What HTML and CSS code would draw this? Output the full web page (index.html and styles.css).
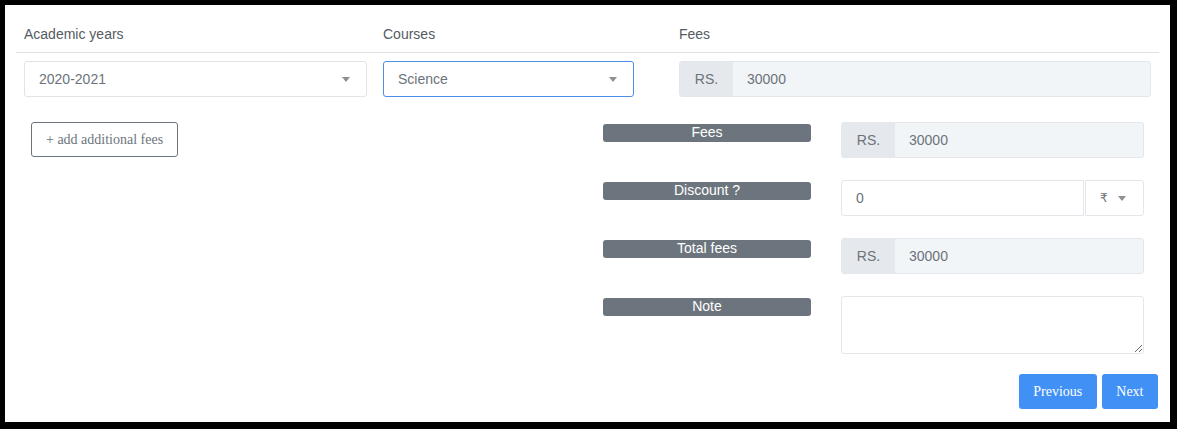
FILE: index.html
```html
<!DOCTYPE html>
<html>
<head>
<meta charset="utf-8">
<link rel="stylesheet" href="styles.css">
</head>
<body>
<div class="page">
  <div class="grid head">
    <div class="cell">Academic years</div>
    <div class="cell">Courses</div>
    <div class="cell">Fees</div>
  </div>
  <div class="grid body-row">
    <div class="cell">
      <div class="select"><span>2020-2021</span><i class="caret"></i></div>
    </div>
    <div class="cell">
      <div class="select select-focus narrow"><span>Science</span><i class="caret"></i></div>
    </div>
    <div class="cell">
      <div class="igroup"><span class="addon">RS.</span><span class="ival">30000</span></div>
    </div>
  </div>

  <div class="lower">
    <div class="left">
      <button class="btn-outline">+ add additional fees</button>
    </div>
    <div class="right">
      <div class="frow">
        <div class="badge">Fees</div>
        <div class="igroup sm"><span class="addon">RS.</span><span class="ival">30000</span></div>
      </div>
      <div class="frow">
        <div class="badge">Discount ?</div>
        <div class="disc">
          <div class="dinput">0</div>
          <div class="dselect"><span>₹</span><i class="caret"></i></div>
        </div>
      </div>
      <div class="frow">
        <div class="badge">Total fees</div>
        <div class="igroup sm"><span class="addon">RS.</span><span class="ival">30000</span></div>
      </div>
      <div class="frow">
        <div class="badge">Note</div>
        <textarea class="note"></textarea>
      </div>
    </div>
  </div>

  <div class="actions">
    <button class="btn-primary">Previous</button>
    <button class="btn-primary">Next</button>
  </div>
</div>
</body>
</html>
```

FILE: styles.css
```css
* { box-sizing: border-box; }
html, body { margin: 0; padding: 0; background: #000; }
body { font-family: "Liberation Sans", Arial, sans-serif; font-size: 14px; }

.page {
  margin: 5px;
  width: 1165px;
  height: 417px;
  background: #fff;
  padding: 10px 11px 0 11px;
}

.grid {
  display: grid;
  grid-template-columns: 359px 296px 1fr;
}
.head { border-bottom: 1px solid #dee2e6; }
.head .cell {
  padding: 9px 8px 8px;
  line-height: 20px;
  color: #555b61;
}
.body-row .cell { padding: 8px 8px 8px; }

.select {
  height: 36px;
  border: 1px solid #e0e4e8;
  border-radius: 3px;
  display: flex;
  align-items: center;
  justify-content: space-between;
  padding: 0 15px 0 14px;
  color: #6c737a;
}
.select-focus { border-color: #4a8fe7; }
.narrow { width: 251px; }

.caret {
  display: inline-block;
  width: 0; height: 0;
  border-left: 4px solid transparent;
  border-right: 4px solid transparent;
  border-top: 5px solid #8c9196;
  margin-right: 1px;
}

.igroup {
  display: flex;
  height: 36px;
  border: 1px solid #e3e7eb;
  border-radius: 3px;
  background: #f2f5f8;
  overflow: hidden;
  color: #6c737a;
}
.igroup .addon {
  width: 53px;
  background: #e5e8ec;
  display: flex;
  align-items: center;
  justify-content: center;
  font-size: 14px;
}
.igroup .ival {
  display: flex;
  align-items: center;
  padding-left: 14px;
}

.lower {
  display: flex;
  margin-top: 17px;
}
.left { width: 572px; padding: 0 15px; }
.right { flex: 1; padding: 0 15px 0 15px; display: flex; flex-direction: column; gap: 22px; }

.btn-outline {
  height: 35px;
  padding: 0 14px;
  background: #fff;
  border: 1px solid #6c757d;
  border-radius: 3px;
  color: #6c757d;
  font-family: "Liberation Serif", "Times New Roman", serif;
  font-size: 14px;
}

.frow {
  display: grid;
  grid-template-columns: 208px 1fr;
  column-gap: 30px;
  align-items: start;
}
.badge {
  margin-top: 2px;
  height: 18px;
  line-height: 17px;
  background: #6c757d;
  color: #fff;
  border-radius: 3px;
  text-align: center;
  font-size: 14px;
}

.disc { display: flex; height: 36px; }
.dinput {
  flex: 1;
  border: 1px solid #e3e7eb;
  border-radius: 3px 0 0 3px;
  display: flex;
  align-items: center;
  padding-left: 14px;
  color: #6c737a;
}
.dselect {
  width: 59px;
  margin-left: 1px;
  border: 1px solid #e3e7eb;
  border-radius: 0 3px 3px 0;
  display: flex;
  align-items: center;
  justify-content: space-between;
  padding: 0 16px 0 14px;
  color: #6c737a;
  font-family: "DejaVu Sans", sans-serif;
  font-size: 12px;
}

.note {
  height: 58px;
  width: 100%;
  border: 1px solid #e3e7eb;
  border-radius: 3px;
  resize: vertical;
  margin: 0;
  display: block;
}

.actions {
  display: flex;
  justify-content: flex-end;
  gap: 5px;
  margin-top: 20px;
  padding-right: 1px;
}
.btn-primary {
  height: 35px;
  padding: 0 14.5px;
  background: #4190f5;
  border: none;
  border-radius: 3px;
  color: #fff;
  font-family: "Liberation Serif", "Times New Roman", serif;
  font-size: 14px;
}
```
